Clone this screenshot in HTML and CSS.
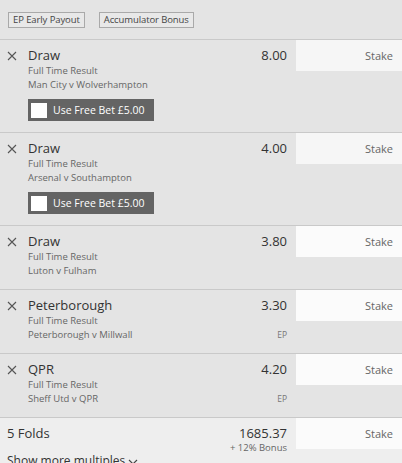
FILE: index.html
```html
<!DOCTYPE html>
<html lang="en">
<head>
    <meta charset="UTF-8">
    <meta name="viewport" content="width=device-width, initial-scale=1.0">
    <title>Bet Slip</title>
    <link rel="stylesheet" href="styles.css">
</head>
<body>
    <div class="slip">
        <div class="tags">
            <span class="tag">EP Early Payout</span>
            <span class="tag">Accumulator Bonus</span>
        </div>

        <div class="bet">
            <div class="bet-main">
                <span class="remove"><svg viewBox="0 0 10 10" width="10" height="10"><path d="M1 1L9 9M9 1L1 9"/></svg></span>
                <div class="bet-info">
                    <div class="bet-head"><span class="selection">Draw</span><span class="odds">8.00</span></div>
                    <div class="market">Full Time Result</div>
                    <div class="event"><span>Man City v Wolverhampton</span></div>
                    <div class="free-bet"><span class="check"></span>Use Free Bet £5.00</div>
                </div>
            </div>
            <div class="stake-col"><div class="stake stake-soft">Stake</div></div>
        </div>

        <div class="bet">
            <div class="bet-main">
                <span class="remove"><svg viewBox="0 0 10 10" width="10" height="10"><path d="M1 1L9 9M9 1L1 9"/></svg></span>
                <div class="bet-info">
                    <div class="bet-head"><span class="selection">Draw</span><span class="odds">4.00</span></div>
                    <div class="market">Full Time Result</div>
                    <div class="event"><span>Arsenal v Southampton</span></div>
                    <div class="free-bet"><span class="check"></span>Use Free Bet £5.00</div>
                </div>
            </div>
            <div class="stake-col"><div class="stake stake-soft">Stake</div></div>
        </div>

        <div class="bet">
            <div class="bet-main">
                <span class="remove"><svg viewBox="0 0 10 10" width="10" height="10"><path d="M1 1L9 9M9 1L1 9"/></svg></span>
                <div class="bet-info">
                    <div class="bet-head"><span class="selection">Draw</span><span class="odds">3.80</span></div>
                    <div class="market">Full Time Result</div>
                    <div class="event"><span>Luton v Fulham</span></div>
                </div>
            </div>
            <div class="stake-col"><div class="stake">Stake</div></div>
        </div>

        <div class="bet">
            <div class="bet-main">
                <span class="remove"><svg viewBox="0 0 10 10" width="10" height="10"><path d="M1 1L9 9M9 1L1 9"/></svg></span>
                <div class="bet-info">
                    <div class="bet-head"><span class="selection">Peterborough</span><span class="odds">3.30</span></div>
                    <div class="market">Full Time Result</div>
                    <div class="event"><span>Peterborough v Millwall</span><span class="ep">EP</span></div>
                </div>
            </div>
            <div class="stake-col"><div class="stake">Stake</div></div>
        </div>

        <div class="bet">
            <div class="bet-main">
                <span class="remove"><svg viewBox="0 0 10 10" width="10" height="10"><path d="M1 1L9 9M9 1L1 9"/></svg></span>
                <div class="bet-info">
                    <div class="bet-head"><span class="selection">QPR</span><span class="odds">4.20</span></div>
                    <div class="market">Full Time Result</div>
                    <div class="event"><span>Sheff Utd v QPR</span><span class="ep">EP</span></div>
                </div>
            </div>
            <div class="stake-col"><div class="stake">Stake</div></div>
        </div>

        <div class="multiples">
            <div class="fold">
                <div class="fold-main">
                    <div class="bet-head"><span class="fold-name">5 Folds</span><span class="odds">1685.37</span></div>
                    <div class="bonus">+ 12% Bonus</div>
                </div>
                <div class="stake-col"><div class="stake">Stake</div></div>
            </div>
            <div class="more">Show more multiples <svg viewBox="0 0 10 6" width="10" height="6"><path d="M1 1L5 5L9 1"/></svg></div>
        </div>
    </div>
</body>
</html>
```

FILE: styles.css
```css
* {
    margin: 0;
    padding: 0;
    box-sizing: border-box;
}

html, body {
    overflow: hidden;
}

body {
    background: #e4e4e4;
    color: #333;
    font-family: 'Open Sans', 'Noto Sans', sans-serif;
}

.tags {
    display: flex;
    gap: 14px;
    padding: 12px 8px 0;
    height: 40px;
    border-bottom: 1px solid #c9c9c9;
}

.tag {
    height: 16px;
    padding: 0 4px;
    border: 1px solid #a9a9a9;
    background: #e8e8e8;
    color: #444;
    font-size: 9.5px;
    line-height: 14px;
    letter-spacing: -0.1px;
}

.bet {
    display: flex;
    border-bottom: 1px solid #c9c9c9;
}

.bet-main {
    flex: 1;
    display: flex;
    padding: 7px 9px 11px 7px;
}

.remove {
    width: 21px;
    padding-top: 4px;
}

.remove svg {
    display: block;
    stroke: #555;
    stroke-width: 1.1;
    fill: none;
}

.bet-info {
    flex: 1;
}

.bet-head {
    display: flex;
    justify-content: space-between;
    height: 17px;
    line-height: 17px;
}

.selection, .fold-name {
    font-size: 13px;
    color: #333;
}

.odds {
    font-size: 13px;
    color: #333;
}

.market, .event {
    font-size: 9.5px;
    line-height: 14px;
    color: #666;
}

.event {
    display: flex;
    justify-content: space-between;
}

.ep {
    font-size: 8.5px;
    color: #777;
}

.free-bet {
    display: flex;
    align-items: center;
    gap: 6px;
    width: max-content;
    height: 22px;
    margin-top: 7px;
    padding: 0 10px 0 3px;
    background: #646464;
    color: #fff;
    font-size: 10.5px;
}

.check {
    width: 16px;
    height: 15px;
    background: #fff;
}

.stake-col {
    width: 106px;
}

.stake {
    height: 31px;
    padding-right: 9px;
    background: #fbfbfb;
    color: #666;
    font-size: 11px;
    line-height: 31px;
    text-align: right;
}

.stake-soft {
    background: #f6f6f6;
}

.multiples {
    background: #eeeeee;
    height: 60px;
}

.fold {
    display: flex;
}

.fold-main {
    flex: 1;
    padding: 7px 9px 0 7px;
}

.fold-name {
    font-size: 13px;
}

.bonus {
    font-size: 9.5px;
    line-height: 11px;
    color: #666;
    text-align: right;
}

.more {
    padding: 0 7px;
    font-size: 12px;
    line-height: 15px;
    color: #333;
}

.more svg {
    stroke: #444;
    stroke-width: 1.1;
    fill: none;
}
```
